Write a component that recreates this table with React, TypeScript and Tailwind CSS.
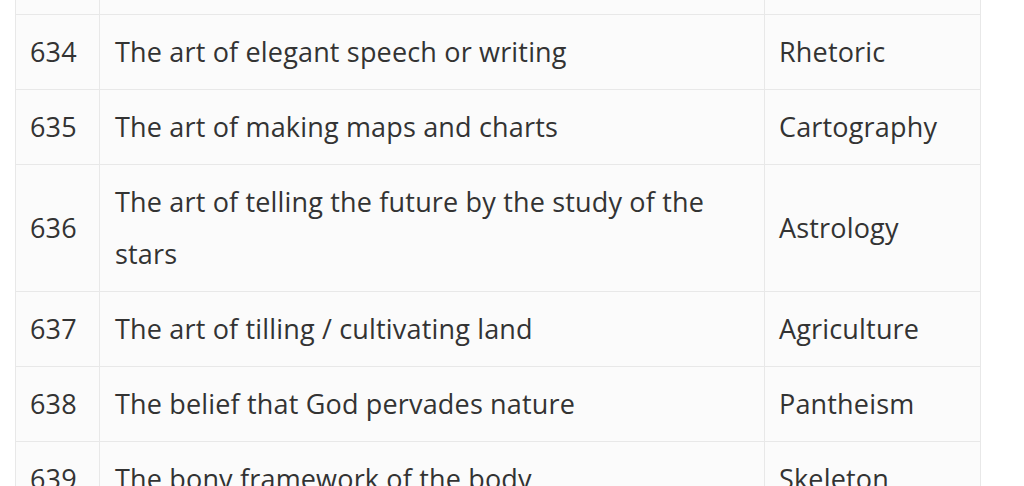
import React from 'react';

type Row = { no: string; meaning: string; word: string };

const rows: Row[] = [
  { no: '\u00a0', meaning: '\u00a0', word: '\u00a0' },
  { no: '634', meaning: 'The art of elegant speech or writing', word: 'Rhetoric' },
  { no: '635', meaning: 'The art of making maps and charts', word: 'Cartography' },
  { no: '636', meaning: 'The art of telling the future by the study of the stars', word: 'Astrology' },
  { no: '637', meaning: 'The art of tilling / cultivating land', word: 'Agriculture' },
  { no: '638', meaning: 'The belief that God pervades nature', word: 'Pantheism' },
  { no: '639', meaning: 'The bony framework of the body', word: 'Skeleton' },
];

export default function App() {
  return (
    <div className="h-[486px] w-[1024px] overflow-hidden bg-white">
      {/* word list table, scrolled so that row 633 is almost off screen */}
      <table
        className="ml-[15px] mt-[-61px] w-[965px] table-fixed border-collapse text-[27px] leading-[52px] tracking-[0.17px] text-[#333333]"
        style={{ fontFamily: '"Open Sans", "Noto Sans", sans-serif' }}
      >
        <colgroup>
          <col className="w-[84px]" />
          <col className="w-[665px]" />
          <col className="w-[216px]" />
        </colgroup>
        <tbody>
          {rows.map((r, i) => (
            <tr key={i} className="bg-[#fbfbfb]">
              <td className="border border-[#e8e8e8] px-[14px] py-[11px] align-middle">{r.no}</td>
              <td className="border border-[#e8e8e8] px-[15px] py-[11px] align-middle">{r.meaning}</td>
              <td className="border border-[#e8e8e8] px-[14px] py-[11px] align-middle">{r.word}</td>
            </tr>
          ))}
        </tbody>
      </table>
    </div>
  );
}
